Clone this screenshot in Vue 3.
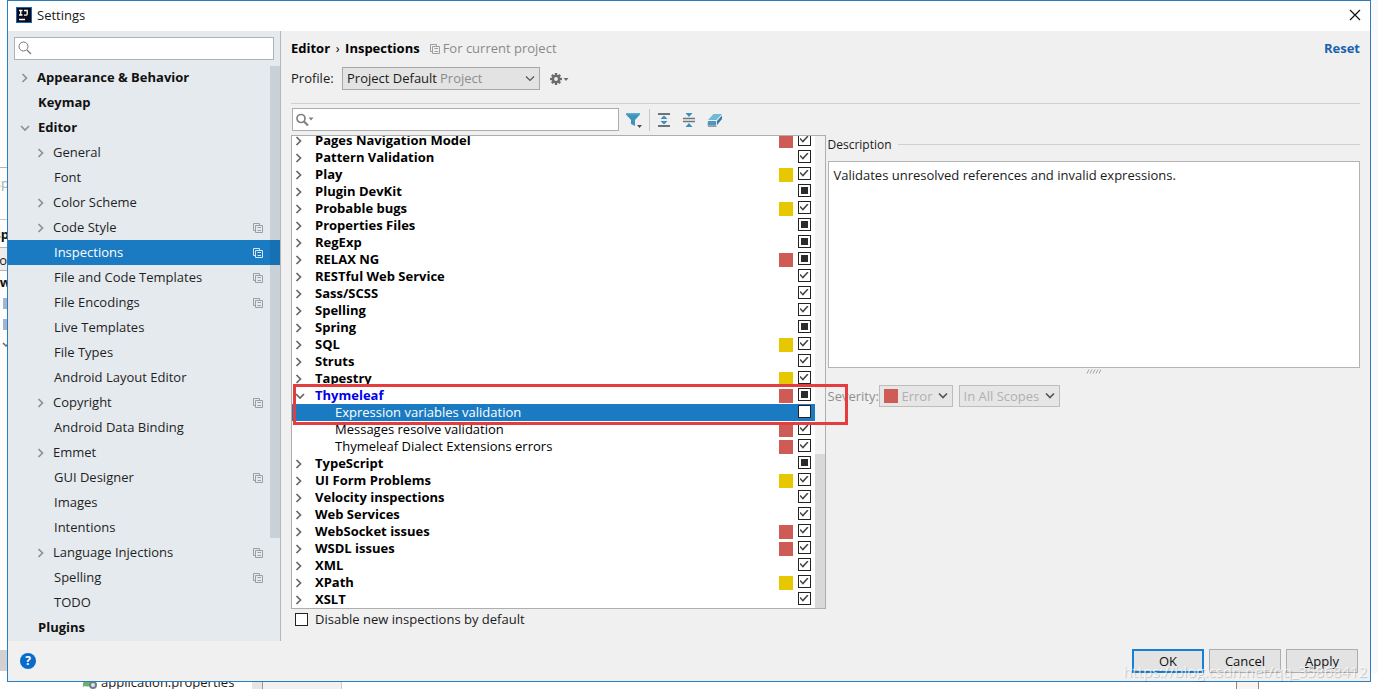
<script setup>
const sections = [
  { name: 'Appearance & Behavior', top: true, arrow: 'right' },
  { name: 'Keymap', top: true },
  { name: 'Editor', top: true, arrow: 'down' },
  { name: 'General', arrow: 'right' },
  { name: 'Font' },
  { name: 'Color Scheme', arrow: 'right' },
  { name: 'Code Style', arrow: 'right', copy: true },
  { name: 'Inspections', copy: true, active: true },
  { name: 'File and Code Templates', copy: true },
  { name: 'File Encodings', copy: true },
  { name: 'Live Templates' },
  { name: 'File Types' },
  { name: 'Android Layout Editor' },
  { name: 'Copyright', arrow: 'right', copy: true },
  { name: 'Android Data Binding' },
  { name: 'Emmet', arrow: 'right' },
  { name: 'GUI Designer', copy: true },
  { name: 'Images' },
  { name: 'Intentions' },
  { name: 'Language Injections', arrow: 'right', copy: true },
  { name: 'Spelling', copy: true },
  { name: 'TODO' },
  { name: 'Plugins', top: true },
]

const inspections = [
  { name: 'Pages Navigation Model', level: 'red', state: 'on' },
  { name: 'Pattern Validation', state: 'on' },
  { name: 'Play', level: 'yellow', state: 'on' },
  { name: 'Plugin DevKit', state: 'mixed' },
  { name: 'Probable bugs', level: 'yellow', state: 'on' },
  { name: 'Properties Files', state: 'mixed' },
  { name: 'RegExp', state: 'mixed' },
  { name: 'RELAX NG', level: 'red', state: 'mixed' },
  { name: 'RESTful Web Service', state: 'on' },
  { name: 'Sass/SCSS', state: 'on' },
  { name: 'Spelling', state: 'on' },
  { name: 'Spring', state: 'mixed' },
  { name: 'SQL', level: 'yellow', state: 'on' },
  { name: 'Struts', state: 'on' },
  { name: 'Tapestry', level: 'yellow', state: 'on' },
  { name: 'Thymeleaf', level: 'red', state: 'mixed', open: true },
  { name: 'Expression variables validation', child: true, state: 'off', selected: true },
  { name: 'Messages resolve validation', child: true, level: 'red', state: 'on' },
  { name: 'Thymeleaf Dialect Extensions errors', child: true, level: 'red', state: 'on' },
  { name: 'TypeScript', state: 'mixed' },
  { name: 'UI Form Problems', level: 'yellow', state: 'on' },
  { name: 'Velocity inspections', state: 'on' },
  { name: 'Web Services', state: 'on' },
  { name: 'WebSocket issues', level: 'red', state: 'on' },
  { name: 'WSDL issues', level: 'red', state: 'on' },
  { name: 'XML', state: 'on' },
  { name: 'XPath', level: 'yellow', state: 'on' },
  { name: 'XSLT', state: 'on' },
]
</script>

<template>
  <div class="desktop">
    <div class="behind-left" aria-hidden="true">
      <span class="frag line-top"></span>
      <span class="frag frag-search">sp</span>
      <span class="frag frag-bold">sp</span>
      <span class="frag frag-tab">o</span>
      <span class="frag frag-w">w</span>
      <span class="frag chip chip-a"></span>
      <span class="frag chip chip-b"></span>
      <svg class="frag frag-arrow" width="8" height="8" viewBox="0 0 8 8"><path d="M1 2l3 3 3-3" fill="none" stroke="#666" stroke-width="1.5" /></svg>
      <span class="frag chip-c"></span>
    </div>
    <div class="behind-bottom" aria-hidden="true">
      <svg class="leaf" width="16" height="16" viewBox="0 0 16 16">
        <path d="M1 13C0 6 5 3 13 2c1 8-4 12-10 10z" fill="#6cb26f" />
        <circle cx="11" cy="11" r="3" fill="#dde4ea" stroke="#71808c" stroke-width="2" />
      </svg>
      <span class="file">application.properties</span>
      <span class="gutter"></span>
      <span class="gutter-right"></span>
    </div>

    <main class="dialog">
      <header class="title">
        <svg width="16" height="16" viewBox="0 0 16 16">
          <rect width="16" height="16" fill="#1767b5" />
          <rect x="1" y="1" width="14" height="14" fill="#0a0a18" />
          <path d="M3 3.500h3.500M4.750 3.500v4.500M3 8h3.500M8 3.500h3.200v3.500q0 1.200-1.500 1.200H8M3 12.500h6" fill="none" stroke="#fff" stroke-width="1.3" />
        </svg>
        <h1>Settings</h1>
        <button class="close" aria-label="Close">
          <svg width="12" height="12" viewBox="0 0 12 12"><path d="M1 1l10 10M11 1L1 11" stroke="#111" stroke-width="1.2" /></svg>
        </button>
      </header>

      <div class="body">
        <aside class="side">
          <div class="side-search">
            <svg width="14" height="14" viewBox="0 0 14 14"><circle cx="5.500" cy="5.500" r="4.500" fill="none" stroke="#777" /><path d="M9 9l4 4" stroke="#777" stroke-width="1.300" /></svg>
            <input type="text" aria-label="Search settings" />
          </div>
          <nav class="tree">
            <a
              v-for="s in sections"
              :key="s.name"
              href="#"
              :class="['node', { top: s.top, active: s.active, arrowed: s.arrow === 'right' }]"
            >
              <span class="twist">
                <svg v-if="s.arrow === 'right'" width="8" height="10" viewBox="0 0 8 10"><path d="M2.500 1l4 4-4 4" fill="none" stroke="#8e9194" stroke-width="1.700" /></svg>
                <svg v-if="s.arrow === 'down'" width="10" height="8" viewBox="0 0 10 8"><path d="M1 2l4 4 4-4" fill="none" stroke="#8e9194" stroke-width="1.700" /></svg>
              </span>
              <span class="node-name">{{ s.name }}</span>
              <svg v-if="s.copy" class="copy" width="10" height="10" viewBox="0 0 10 10"><path d="M2.500 7.500h-2v-7h6v2M2.500 2.500h7v7h-7zM4.500 4.500h3.500M4.500 7.500h3.500" fill="none" stroke="currentColor" /></svg>
            </a>
            <span class="side-thumb"></span>
          </nav>
        </aside>

        <section class="main">
          <div class="crumbs">
            <b>Editor</b><span class="sep">›</span><b>Inspections</b>
            <svg class="copy" width="10" height="10" viewBox="0 0 10 10"><path d="M2.500 7.500h-2v-7h6v2M2.500 2.500h7v7h-7zM4.500 4.500h3.500M4.500 7.500h3.500" fill="none" stroke="currentColor" /></svg>
            <span class="scope">For current project</span>
            <a class="reset" href="#">Reset</a>
          </div>

          <div class="profile">
            <label for="profile">Profile:</label>
            <div class="combo combo-profile">
              <select id="profile"><option>Project Default</option></select>
              <span class="hint">Project</span>
              <svg class="chev" width="10" height="8" viewBox="0 0 10 8"><path d="M1 1.500l4 4 4-4" fill="none" stroke="#555" stroke-width="1.200" /></svg>
            </div>
            <button class="gear" aria-label="Profile actions">
              <svg width="20" height="14" viewBox="0 0 20 14">
                <g stroke="#6b6b6b" stroke-width="2.400"><path d="M7 1v12M1 7h12M2.800 2.800l8.400 8.400M11.200 2.800l-8.400 8.400" /></g>
                <circle cx="7" cy="7" r="4.200" fill="#6b6b6b" /><circle cx="7" cy="7" r="1.900" fill="#f0f0f0" />
                <path d="M14.500 6h5l-2.500 3z" fill="#6b6b6b" />
              </svg>
            </button>
          </div>

          <div class="work">
            <div class="left">
              <div class="tools">
                <div class="filter-box">
                  <svg width="18" height="14" viewBox="0 0 18 14"><circle cx="5" cy="5.500" r="4" fill="none" stroke="#808080" stroke-width="1.700" /><path d="M8 8.500l4 4" stroke="#808080" stroke-width="2.200" /><path d="M12.500 4.500h5L15 7.500z" fill="#808080" /></svg>
                  <input type="text" aria-label="Search inspections" />
                </div>
                <button aria-label="Filter inspections" class="tool-filter">
                  <svg width="18" height="16" viewBox="0 0 18 16"><path d="M1 1h14v1.500L10 8v6l-4-2V8L1 2.500z" fill="#3f94bd" /><path d="M1 1h14v1.500H1z" fill="#5baed3" /><path d="M12 13h5l-2.500 3z" fill="#544a63" /></svg>
                </button>
                <span class="tool-sep"></span>
                <button aria-label="Expand all">
                  <svg width="14" height="14" viewBox="0 0 14 14"><path d="M1 1h12M1 13h12" stroke="#6e7479" stroke-width="1.800" /><path d="M7 2.500l3.500 3.500h-7zM7 11.500L3.500 8h7z" fill="#3c8fb8" /></svg>
                </button>
                <button aria-label="Collapse all">
                  <svg width="14" height="14" viewBox="0 0 14 14"><path d="M1 5.500h12M1 8.500h12" stroke="#6e7479" stroke-width="1.600" /><path d="M3.500 0h7L7 4zM7 10l3.500 4h-7z" fill="#3c8fb8" /></svg>
                </button>
                <button aria-label="Reset to empty">
                  <svg width="16" height="14" viewBox="0 0 16 14"><path d="M6.500 1H15L9.500 7H1z" fill="#74b8d8" /><path d="M1 8h8.200v4H1z" fill="#8cb9d0" /><path d="M1 8l-.5 4.500H9V8z" fill="#4d97bd" /><path d="M10 8l5-5.500V6l-5 6z" fill="#2f7ba5" /><path d="M1 13.200h8.500" stroke="#64747e" /></svg>
                </button>
              </div>

              <div class="list-wrap">
                <div class="list">
                  <ul>
                    <li
                      v-for="(r, i) in inspections"
                      :key="r.name"
                      :class="{ child: r.child, selected: r.selected, open: r.open }"
                    >
                      <span class="row-twist">
                        <svg v-if="!r.child && !r.open" width="8" height="10" viewBox="0 0 8 10"><path d="M1.500 1l4 4-4 4" fill="none" stroke="#666" stroke-width="1.700" /></svg>
                        <svg v-if="r.open" width="10" height="8" viewBox="0 0 10 8"><path d="M1 2l4 4 4-4" fill="none" stroke="#666" stroke-width="1.700" /></svg>
                      </span>
                      <label :for="'insp' + i">{{ r.name }}</label>
                      <span :class="['level', r.level]"></span>
                      <input
                        :id="'insp' + i"
                        type="checkbox"
                        :checked="r.state === 'on'"
                        :indeterminate.prop="r.state === 'mixed'"
                      />
                    </li>
                  </ul>
                  <span class="track"><span class="thumb"></span></span>
                </div>
                <span class="callout"></span>
              </div>

              <div class="disable">
                <input id="disable" type="checkbox" />
                <label for="disable">Disable new inspections by default</label>
              </div>
            </div>

            <div class="right">
              <h2>Description</h2>
              <div class="description">Validates unresolved references and invalid expressions.</div>
              <svg class="grip" width="15" height="5" viewBox="0 0 15 5"><path d="M1 4.500l2-4M4 4.500l2-4M7 4.500l2-4M10 4.500l2-4M13 4.500l2-4" stroke="#a5a5a5" /></svg>
              <div class="severity">
                <label for="severity">Severity:</label>
                <div class="combo combo-error">
                  <span class="level red"></span>
                  <select id="severity" disabled><option>Error</option></select>
                  <svg class="chev" width="10" height="8" viewBox="0 0 10 8"><path d="M1 1.500l4 4 4-4" fill="none" stroke="#555" stroke-width="1.700" /></svg>
                </div>
                <div class="combo combo-scope">
                  <select aria-label="Scope" disabled><option>In All Scopes</option></select>
                  <svg class="chev" width="10" height="8" viewBox="0 0 10 8"><path d="M1 1.500l4 4 4-4" fill="none" stroke="#555" stroke-width="1.700" /></svg>
                </div>
              </div>
            </div>
          </div>
        </section>
      </div>

      <footer class="foot">
        <button class="help" aria-label="Help">?</button>
        <button class="btn primary">OK</button>
        <button class="btn">Cancel</button>
        <button class="btn"><u>A</u>pply</button>
      </footer>
    </main>
    <span class="watermark">https://blog.csdn.net/qq_35868412</span>
  </div>
</template>

<style>
body {
  background: #fff;
}
</style>

<style scoped>
* {
  box-sizing: border-box;
}
.desktop {
  position: relative;
  display: flex;
  height: 100vh;
  min-height: 600px;
  padding: 0 7px 7px;
  overflow: hidden;
  background: #f8f9fb;
  font: 13px/17px "Open Sans", "Noto Sans", sans-serif;
  color: #1a1a1a;
}
button,
input,
select {
  margin: 0;
  padding: 0;
  border: 0;
  border-radius: 0;
  font: inherit;
  color: inherit;
  background: none;
  outline: 0;
}
svg {
  display: block;
  flex: none;
}

/* Window behind the dialog */
.behind-left {
  position: absolute;
  inset: 0 auto 0 0;
  width: 7px;
  overflow: hidden;
  background: #fdfdfd;
}
.frag {
  position: absolute;
  right: 0;
}
.line-top {
  top: 167px;
  width: 7px;
  height: 1px;
  background: #b5b5b5;
}
.frag-search {
  top: 175px;
  right: -2px;
  color: #aaa;
}
.frag-bold {
  top: 219px;
  right: -2px;
  border-top: 1px solid #c8c8c8;
  line-height: 28px;
  font-weight: 700;
  color: #111;
}
.frag-tab {
  top: 247px;
  height: 24px;
  line-height: 24px;
  border: solid #b5b5b5;
  border-width: 1px 0;
  background: #ececec;
}
.frag-w {
  top: 274px;
  right: -4px;
  font-weight: 700;
  color: #111;
}
.chip {
  width: 4px;
  height: 11px;
  background: #9fb6cc;
}
.chip-a {
  top: 298px;
}
.chip-b {
  top: 319px;
}
.frag-arrow {
  top: 341px;
  right: -3px;
}
.chip-c {
  top: 650px;
  width: 7px;
  height: 21px;
  background: #d3d0d2;
}
.behind-bottom {
  position: absolute;
  inset: auto 0 0 0;
  height: 16px;
  overflow: hidden;
  background: #fff;
}
.leaf {
  position: absolute;
  left: 82px;
  top: 1px;
}
.file {
  position: absolute;
  left: 101px;
  top: 0;
  line-height: 18px;
}
.gutter {
  position: absolute;
  left: 252px;
  top: 0;
  width: 90px;
  height: 16px;
  background: linear-gradient(90deg, #e6e6e6 10px, #999 10px, #999 11px, #f1f1f1 11px, #f1f1f1 89px, #ccc 89px);
}
.gutter-right {
  position: absolute;
  right: 119px;
  top: 0;
  width: 23px;
  height: 16px;
  border: solid #888;
  border-width: 0 1px;
  background: #f7f3f1;
}

/* Dialog shell */
.dialog {
  position: relative;
  flex: 1;
  min-width: 0;
  display: flex;
  flex-direction: column;
  border: 1px solid #2f7cba;
  background: #f0f0f0;
}
.title {
  flex: none;
  display: flex;
  align-items: center;
  gap: 5px;
  height: 30px;
  padding: 0 9px 2px 8px;
  background: #fff;
}
h1 {
  margin: 0;
  font-size: 13px;
  font-weight: 400;
}
.close {
  margin-left: auto;
}
.body {
  flex: 1;
  min-height: 0;
  display: flex;
}

/* Settings tree */
.side {
  flex: none;
  display: flex;
  flex-direction: column;
  width: 273px;
  padding-top: 6px;
  border-right: 1px solid #b4b8bc;
  background: #e5eaee;
}
.side-search {
  flex: none;
  display: flex;
  align-items: center;
  gap: 4px;
  height: 23px;
  margin: 0 6px 5px;
  padding: 0 3px 2px;
  border: 1px solid #b0b3b5;
  background: #fff;
}
input[type="text"] {
  flex: 1;
  min-width: 0;
  height: 19px;
}
.tree {
  position: relative;
  flex: 1;
  min-height: 0;
  overflow: hidden;
}
.node {
  display: flex;
  align-items: center;
  height: 25px;
  padding: 0 17px 0 28px;
  color: #1f1f1f;
  text-decoration: none;
}
.node.top {
  padding-left: 12px;
  font-weight: 700;
  color: #111;
}
.twist {
  flex: none;
  display: flex;
  width: 18px;
}
.node.arrowed .twist {
  width: 17px;
}
.node-name {
  flex: 1;
}
.copy {
  color: #9a9fa3;
}
.node.active {
  background: #1a7bc2;
  color: #fff;
}
.node.active .copy {
  color: #d5e8f7;
}
.side-thumb {
  position: absolute;
  top: 1px;
  right: 0;
  width: 10px;
  height: 472px;
  background: rgba(0, 30, 60, 0.12);
}

/* Content */
.main {
  flex: 1;
  min-width: 0;
  display: flex;
  flex-direction: column;
  padding: 9px 10px 0;
}
.crumbs {
  display: flex;
  align-items: center;
  height: 17px;
  color: #000;
}
.sep {
  width: 15px;
  text-align: center;
}
.crumbs .copy {
  margin: 0 3px 0 10px;
}
.scope {
  color: #8a8a8a;
}
.reset {
  margin-left: auto;
  font-weight: 700;
  color: #1a62ab;
  text-decoration: none;
}
.profile {
  display: flex;
  align-items: center;
  height: 47px;
  padding-bottom: 3px;
  border-bottom: 1px solid #d0d0d0;
}
.profile > label {
  width: 51px;
}
.combo {
  position: relative;
  display: flex;
  align-items: center;
  height: 23px;
  border: 1px solid #a8a8a8;
  background: #e3e3e3;
}
select {
  appearance: none;
  flex: 1;
  width: 100%;
  height: 21px;
  padding: 0 16px 0 4px;
}
select:disabled {
  opacity: 1;
  color: #b0b0b0;
}
.chev {
  position: absolute;
  right: 4px;
  pointer-events: none;
}
.combo-profile {
  width: 198px;
}
.hint {
  position: absolute;
  left: 97px;
  color: #8c8c8c;
  pointer-events: none;
}
.gear {
  margin-left: 9px;
}
.work {
  flex: 1;
  min-height: 0;
  display: flex;
  gap: 2px;
}
.left {
  flex: 0 0 50%;
  display: flex;
  flex-direction: column;
}
.tools {
  display: flex;
  align-items: center;
  gap: 11px;
  height: 31px;
}
.filter-box {
  display: flex;
  align-items: center;
  flex: 0 0 327px;
  height: 23px;
  margin-left: 1px;
  padding: 0 3px;
  border: 1px solid #adadad;
  background: #fff;
}
.tool-filter {
  margin-left: -5px;
}
.tool-sep {
  width: 1px;
  height: 22px;
  margin: 0 -4px 0 -5px;
  background: #c8c8c8;
}
.list-wrap {
  position: relative;
  flex: 1;
  min-height: 0;
  display: flex;
}
.list {
  flex: 1;
  display: flex;
  overflow: hidden;
  border: 1px solid #aeaeae;
  background: #fff;
}
ul {
  flex: 1;
  display: flex;
  flex-direction: column;
  justify-content: flex-end;
  margin: 0;
  padding: 0;
  list-style: none;
}
li {
  flex: none;
  display: flex;
  align-items: center;
  height: 17px;
  padding: 0 4px 0 3px;
  font-weight: 700;
  color: #000;
}
.row-twist {
  flex: none;
  display: flex;
  width: 20px;
}
li > label {
  flex: 1;
}
li.child {
  font-weight: 400;
}
li.child .row-twist {
  width: 40px;
}
li.open label {
  color: #0000e6;
}
li.selected {
  background: #1a7bc2;
}
li.selected label {
  color: #fff;
}
.level {
  flex: none;
  width: 14px;
  height: 14px;
  margin-right: 5px;
}
.level.red {
  background: #cf5b56;
}
.level.yellow {
  background: #e6c700;
}
input[type="checkbox"] {
  appearance: none;
  flex: none;
  display: grid;
  place-items: center;
  width: 13px;
  height: 13px;
  border: 1px solid #222;
  background: #fff;
}
li > input[type="checkbox"] {
  margin-bottom: 2px;
}
input[type="checkbox"]:checked::after {
  content: "";
  width: 9px;
  height: 8px;
  background: #444;
  clip-path: polygon(0 45%, 12% 30%, 36% 62%, 88% 0, 100% 14%, 38% 92%);
}
input[type="checkbox"]:indeterminate::after {
  content: "";
  width: 7px;
  height: 7px;
  background: #2b2b2b;
}
.track {
  flex: none;
  display: flex;
  align-items: flex-end;
  width: 10px;
  background: #f2f2f2;
}
.thumb {
  width: 10px;
  height: 154px;
  background: #d9d9d9;
}
.callout {
  position: absolute;
  left: 2px;
  right: -22px;
  bottom: 184px;
  height: 41px;
  border: 3px solid #e53c3f;
  pointer-events: none;
}
.disable {
  flex: none;
  display: flex;
  align-items: center;
  gap: 7px;
  height: 32px;
  padding: 0 0 12px 4px;
}

/* Description pane */
.right {
  flex: 1;
  min-width: 0;
  display: flex;
  flex-direction: column;
  padding-top: 32px;
}
h2 {
  display: flex;
  align-items: center;
  gap: 6px;
  margin: 0 0 8px;
  font-size: 12px;
  font-weight: 400;
}
h2::after {
  content: "";
  flex: 1;
  height: 1px;
  background: #d0d0d0;
}
.description {
  height: 207px;
  padding: 5px;
  border: 1px solid #b4b4b4;
  background: #fff;
}
.grip {
  align-self: center;
  margin: 1px 0 11px;
}
.severity {
  display: flex;
  align-items: center;
  color: #8f8f8f;
}
.severity > label {
  width: 51px;
}
.severity .combo {
  height: 22px;
  border-color: #bdbdbd;
  background: #e6e6e6;
}
.severity .level {
  margin: 0 0 0 4px;
}
.combo-error {
  width: 74px;
  margin-right: 6px;
}
.combo-scope {
  width: 101px;
}

/* Footer */
.foot {
  flex: none;
  display: flex;
  align-items: center;
  gap: 5px;
  height: 40px;
  padding: 0 12px;
}
.help {
  width: 16px;
  height: 16px;
  margin-right: auto;
  border-radius: 50%;
  background: #0a6cc9;
  color: #fff;
  font-size: 12px;
  line-height: 16px;
  font-weight: 700;
}
.btn {
  width: 72px;
  height: 24px;
  border: 1px solid #adadad;
  background: #e3e3e3;
  color: #111;
}
.btn.primary {
  border: 2px solid #1480d8;
}
.watermark {
  position: absolute;
  right: 11px;
  bottom: 8px;
  font-size: 15px;
  line-height: 20px;
  color: rgba(255, 255, 255, 0.7);
  text-shadow: 1px 1px 1px rgba(0, 0, 0, 0.2);
  pointer-events: none;
}
</style>
